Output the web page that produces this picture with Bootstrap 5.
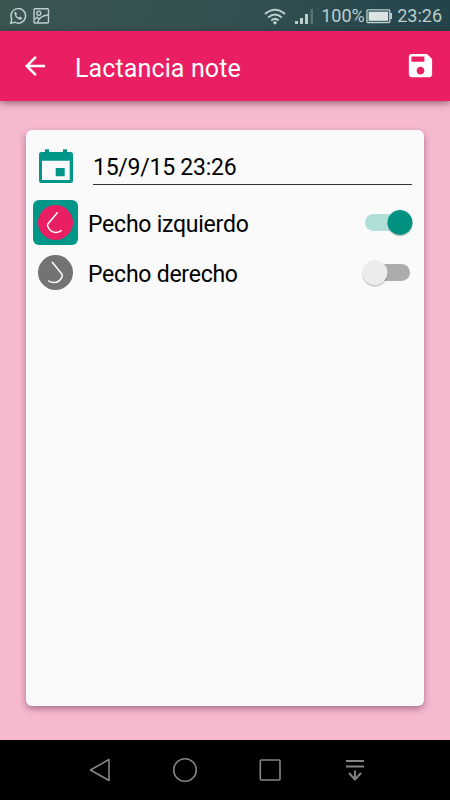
<!DOCTYPE html>
<html lang="es">
<head>
<meta charset="utf-8">
<meta name="viewport" content="width=device-width, initial-scale=1">
<title>Lactancia note</title>
<link href="https://cdn.jsdelivr.net/npm/bootstrap@5.3.0/dist/css/bootstrap.min.css" rel="stylesheet">
<style>
body{font-family:Roboto,"Liberation Sans",sans-serif;background:#f6bad0;height:800px;overflow:hidden}
svg{display:block;flex:none}
.statusbar{height:31px;background:linear-gradient(90deg,#3b5553,#345052 50%,#24444a);color:#bccdcd;padding:1px 8px 0 9px;font-size:18px}
.statusbar span{line-height:28px;white-space:nowrap}
.picture-icon{margin-left:5px}
.charge{width:45px;margin-left:7px}
.clock{margin-left:5px}
.appbar{height:70px;background:#e91e63;color:#fff;padding:0 14px 0 20px;box-shadow:0 2px 7px rgba(60,0,30,.5);z-index:1}
.appbar h1{font-size:25px;font-weight:400;line-height:30px;margin-left:25px;padding-top:5px;letter-spacing:.12px}
.save-icon{margin-bottom:1px}
.stage{padding:29px 26px 34px}
.note{background:#fafafa;border-radius:6px;box-shadow:0 3px 7px rgba(80,20,50,.45);padding:12px 12px 0 7px;color:#000}
.slot{width:45px;height:45px;border-radius:6px;flex:none}
.slot-on{background:#009688}
.date-field{height:43px;border-bottom:1px solid #333;margin-left:15px;font-size:23px;letter-spacing:-.25px;line-height:51px}
.side-rows{padding-top:10px}
.side-row{height:50px}
.side-label{font-size:23px;line-height:30px;margin-left:10px;padding-top:5px;letter-spacing:-.24px}
.toggle{width:50px;height:30px;overflow:visible}
.navkeys{height:60px;background:#000}
</style>
<script src="https://cdn.jsdelivr.net/npm/bootstrap@5.3.0/dist/js/bootstrap.bundle.min.js"></script>
</head>
<body class="d-flex flex-column m-0">
<header class="statusbar d-flex align-items-center flex-shrink-0">
  <svg width="18" height="18" viewBox="0 0 18 18" fill="none" stroke="#bccdcd" stroke-width="1.5"><path d="M2.8 12.2A7.3 7.3 0 1 1 5.7 15.200L1.700 16.300Z"/><path d="M5.500 5.300L6.700 4.700L8 7L7.200 8.200Q8.300 10 10 10.600L11.200 9.500L13.200 10.900Q12.500 13 10.700 12.700Q5.400 11 5.500 5.300Z" fill="#bccdcd" stroke="none"/></svg>
  <svg class="picture-icon" width="18" height="18" viewBox="0 0 18 18" fill="none" stroke="#bccdcd" stroke-width="1.4"><rect x="2" y="1.700" width="14.500" height="14.300" rx="1"/><circle cx="6.800" cy="6.200" r="2"/><path d="M2.500 12.500L5.200 10.200L7.200 12M5.600 15.500Q7.300 8.800 16 8"/></svg>
  <svg class="ms-auto" width="22" height="17" viewBox="0 0 22 17" fill="none" stroke="#bccdcd" stroke-width="2"><path d="M1 6Q11-2.500 21 6M4.200 9.400Q11 3.500 17.800 9.400M7.300 12.400Q11 9.300 14.700 12.400"/><circle cx="11" cy="14.800" r="1.700" fill="#bccdcd" stroke="none"/></svg>
  <svg class="ms-2" width="20" height="17" viewBox="0 0 20 17" fill="#bccdcd"><path d="M1 13h3v3H1zM6 10h3v6H6zM11 6h3v10h-3z"/><path d="M16.500 1h2.500v15h-2.500z" opacity=".3"/></svg>
  <span class="charge">100%</span>
  <svg width="26" height="16" viewBox="0 0 27 16"><rect x="1" y="1.700" width="23.700" height="13" rx="1" fill="none" stroke="#bccdcd" stroke-width="1.400"/><path d="M2.700 3.500h20.300v9.500H2.700z" fill="#dbe3e3"/><path d="M25 5h2v6h-2z" fill="#bccdcd"/></svg>
  <span class="clock">23:26</span>
</header>

<div class="appbar d-flex align-items-center flex-shrink-0 position-relative">
  <svg width="30" height="30" viewBox="0 0 24 24" fill="#fff"><path d="M20 11H7.830l5.590-5.590L12 4l-8 8 8 8 1.410-1.410L7.830 13H20v-2z"/></svg>
  <h1 class="mb-0">Lactancia note</h1>
  <svg class="save-icon ms-auto" width="31" height="31" viewBox="0 0 24 24" fill="#fff"><path d="M17 3H5c-1.110 0-2 .9-2 2v14c0 1.100.89 2 2 2h14c1.100 0 2-.9 2-2V7l-4-4zm-5 16c-1.660 0-3-1.340-3-3s1.340-3 3-3 3 1.340 3 3-1.340 3-3 3zm3-10H5V5h10v4z"/></svg>
</div>

<main class="stage flex-grow-1 d-flex">
  <section class="note flex-grow-1">
    <div class="d-flex">
      <svg class="slot" viewBox="0 0 45 45"><path fill="#009688" fill-rule="evenodd" d="M12 7.300h4V10h14V7.300h4V10h3.500q2.500 0 2.500 2.500V38.500q0 2.500-2.500 2.500H8.500Q6 41 6 38.500V12.500Q6 10 8.500 10H12zM9 18.700V38H36.700V18.700zM22.700 26h9v8.300h-9z"/></svg>
      <div class="date-field flex-grow-1">15/9/15 23:26</div>
    </div>
    <div class="side-rows">
      <div class="side-row d-flex align-items-center">
        <svg class="slot slot-on" viewBox="0 0 45 45"><circle cx="22.500" cy="22.500" r="17.500" fill="#e91e63"/><path d="M24.300 12.700L15 23.800Q14 25.300 15 27C17 31 19.500 32.500 23 32.500Q26.500 32.300 28.300 30.500" fill="none" stroke="#fff" stroke-width="1.500" stroke-linecap="round"/></svg>
        <span class="side-label">Pecho izquierdo</span>
        <svg class="toggle ms-auto" viewBox="0 0 50 30"><rect x="3" y="7" width="45" height="17" rx="8.500" fill="#b0ded9"/><circle cx="38" cy="17" r="12.500" fill="#000" opacity=".18"/><circle cx="38" cy="15.500" r="12.500" fill="#009180"/></svg>
      </div>
      <div class="side-row d-flex align-items-center">
        <svg class="slot" viewBox="0 0 45 45"><circle cx="22.500" cy="22.500" r="17.500" fill="#737373"/><path d="M19.300 12.300L28.800 24Q29.800 25.500 28.800 27.300C27 31 24.500 32.500 21 32.500Q17.800 32.500 15.700 31" fill="none" stroke="#fff" stroke-width="1.500" stroke-linecap="round"/></svg>
        <span class="side-label">Pecho derecho</span>
        <svg class="toggle ms-auto" viewBox="0 0 50 30"><rect x="3" y="7" width="45" height="17" rx="8.500" fill="#acacac"/><circle cx="13" cy="17" r="12.700" fill="#000" opacity=".18"/><circle cx="13" cy="15.500" r="12.500" fill="#ececec"/></svg>
      </div>
    </div>
  </section>
</main>

<nav class="navkeys flex-shrink-0">
  <svg width="450" height="60" viewBox="0 0 450 60" fill="none" stroke="#858585" stroke-width="1.600" stroke-linejoin="round"><path d="M109 19.500V40.500L90.500 30Z"/><circle cx="185" cy="30" r="11.300"/><rect x="260.300" y="20" width="19.700" height="20" rx="1"/><path d="M346 21H364M346 26.500H364M355 30.500V39.500M349 33L355 39.500L361 33" stroke-width="1.900"/></svg>
</nav>
</body>
</html>
